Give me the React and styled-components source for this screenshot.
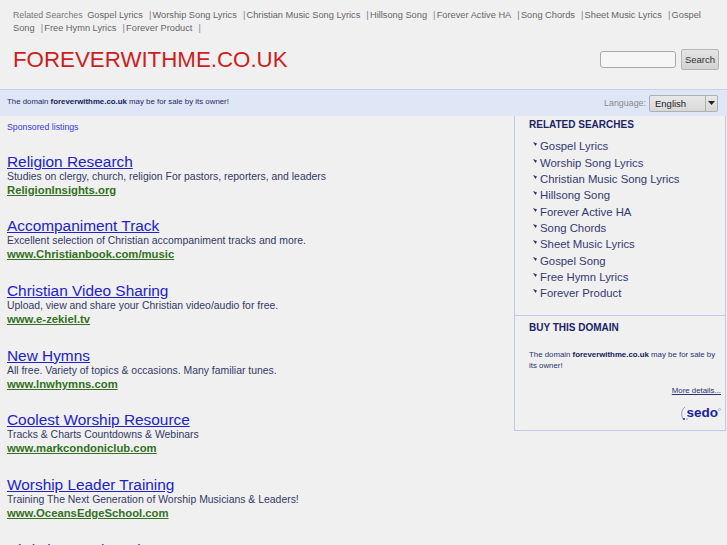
import React from "react";
import styled, { createGlobalStyle } from "styled-components";

const Global = createGlobalStyle`
  html, body { margin: 0; padding: 0; height: 545px; overflow: hidden; background: #f0f0f0; }
  body { font-family: "Liberation Sans", Arial, sans-serif; }
`;
const Page = styled.div`width: 727px; height: 545px; overflow: hidden; background: #f0f0f0;`;
const Header = styled.header`height: 89px; display: flex; flex-direction: column; padding: 0 0 0 13px; box-sizing: border-box;`;
const TopLinks = styled.div`padding-top: 9px; font-size: 9.25px; line-height: 13px; color: #6b6b6b; width: 700px;`;
const TopLabel = styled.span`color: #777; font-size: 8.75px; margin-right: 2px;`;
const TopLink = styled.a`color: #666; margin-right: 3.5px;`;
const Pipe = styled.span`color: #8a7a9a; margin-right: 1.2px;`;
const HeaderRow = styled.div`display: flex; justify-content: space-between; align-items: flex-start; padding-right: 8px;`;
const Logo = styled.h1`margin: 10px 0 0; font-size: 22.3px; line-height: 29px; font-weight: 400; color: #cc1e1e;`;
const SearchForm = styled.div`display: flex; align-items: center; gap: 5px; margin-top: 14px;`;
const SearchInput = styled.div`width: 74px; height: 15px; border: 1px solid #a9a9a9; border-radius: 3px; background: #f6f6f6;`;
const SearchButton = styled.div`width: 36px; height: 19px; border: 1px solid #b5b5b5; border-radius: 2px; background: linear-gradient(#e4e4e4,#d2d2d2); font-size: 9.5px; line-height: 19px; text-align: center; color: #333;`;
const Band = styled.div`height: 26px; background: #dfe6f5; border-top: 1px solid #c6d2ea; display: flex; align-items: center; justify-content: space-between; padding: 0 9px 0 7px;`;
const Notice = styled.div`font-size: 7.85px; line-height: 11px; margin-top: -3px; color: #1f2a66; b { color: #141c5a; }`;
const Lang = styled.div`display: flex; align-items: center; gap: 3px; font-size: 8.9px; color: #8a8a8a;`;
const Select = styled.div`width: 67px; height: 15px; border: 1px solid #b0b0b0; border-radius: 2px; background: linear-gradient(#e8e8e8,#d8d8d8); display: flex; font-size: 9.5px; color: #222; line-height: 15px;`;
const SelectText = styled.div`flex: 1; padding-left: 5px;`;
const SelectArrow = styled.div`width: 11px; border-left: 1px solid #b0b0b0; display: flex; align-items: center; justify-content: center;`;
const Main = styled.div`display: flex; align-items: flex-start;`;
const Left = styled.div`width: 514px; padding: 6px 0 0 7px; box-sizing: border-box;`;
const Sponsored = styled.div`font-size: 8.75px; line-height: 11px; color: #3a3ae0; margin-bottom: 20.5px;`;
const Ad = styled.div`margin-bottom: 21.7px; display: flex; flex-direction: column; align-items: flex-start;`;
const AdTitle = styled.a`font-size: 15.4px; line-height: 16px; color: #2222cc; text-decoration: underline;`;
const AdText = styled.div`font-size: 10.43px; line-height: 14px; color: #333a66;`;
const AdUrl = styled.a`font-size: 11.3px; line-height: 13px; font-weight: 700; color: #33701f; text-decoration: underline;`;
const Side = styled.aside`width: 212px; height: 315px; border: 1px solid #bccbea; border-top: 0; box-sizing: border-box; display: flex; flex-direction: column;`;
const SideTitle = styled.h2`margin: ${p => p.$top}px 0 0; padding: 0 0 0 14px; font-size: 10px; line-height: 14px; font-weight: 700; color: #1a2466;`;
const SearchList = styled.ul`list-style: none; margin: 6px 0 0; padding: 0 0 0 18px; height: 177px; border-bottom: 1px solid #bccbea;`;
const Item = styled.li`display: flex; align-items: center; gap: 3px; height: 16.35px; font-size: 11.35px; color: #333a70;`;
const Bullet = styled.svg`width: 4px; height: 4px; margin-top: -4px; flex: none;`;
const BuyBody = styled.p`margin: 14px 6px 0 14px; font-size: 7.85px; line-height: 11px; color: #2a3270; b { color: #141c5a; }`;
const More = styled.a`align-self: flex-end; margin: 14px 4px 0 0; font-size: 7.85px; line-height: 11px; color: #2a3270; text-decoration: underline;`;
const Sedo = styled.div`position: relative; align-self: flex-end; margin: 9px 7px 0 0; font-size: 13.5px; line-height: 15px; font-weight: 700; color: #1a2299;`;
const SedoSwoosh = styled.svg`position: absolute; left: -6px; top: 1px; width: 8px; height: 15px;`;
const SedoMark = styled.svg`position: absolute; right: -3px; top: 3px; width: 3px; height: 3px;`;

const topLinks = ["Gospel Lyrics","Worship Song Lyrics","Christian Music Song Lyrics","Hillsong Song","Forever Active HA","Song Chords","Sheet Music Lyrics","Gospel Song","Free Hymn Lyrics","Forever Product"];
const ads = [
 ["Religion Research","Studies on clergy, church, religion For pastors, reporters, and leaders","ReligionInsights.org"],
 ["Accompaniment Track","Excellent selection of Christian accompaniment tracks and more.","www.Christianbook.com/music"],
 ["Christian Video Sharing","Upload, view and share your Christian video/audio for free.","www.e-zekiel.tv"],
 ["New Hymns","All free. Variety of topics & occasions. Many familiar tunes.","www.lnwhymns.com"],
 ["Coolest Worship Resource","Tracks & Charts Countdowns & Webinars","www.markcondoniclub.com"],
 ["Worship Leader Training","Training The Next Generation of Worship Musicians & Leaders!","www.OceansEdgeSchool.com"],
 ["Christian Music Lyrics","",""],
];

export default function App() {
  return (
    <Page>
      <Global />
      <Header>
        <TopLinks>
          <TopLabel>Related Searches</TopLabel>{" "}
          {topLinks.map((t) => (
            <React.Fragment key={t}>
              <TopLink>{t}</TopLink>{" "}<Pipe>|</Pipe>
            </React.Fragment>
          ))}
        </TopLinks>
        <HeaderRow>
          <Logo>FOREVERWITHME.CO.UK</Logo>
          <SearchForm>
            <SearchInput />
            <SearchButton>Search</SearchButton>
          </SearchForm>
        </HeaderRow>
      </Header>
      <Band>
        <Notice>The domain <b>foreverwithme.co.uk</b> may be for sale by its owner!</Notice>
        <Lang>
          Language:
          <Select>
            <SelectText>English</SelectText>
            <SelectArrow><svg width="7" height="4" viewBox="0 0 7 4"><path d="M0 0h7L3.5 4z" fill="#222"/></svg></SelectArrow>
          </Select>
        </Lang>
      </Band>
      <Main>
        <Left>
          <Sponsored>Sponsored listings</Sponsored>
          {ads.map(([a,b,c]) => (
            <Ad key={a}>
              <AdTitle>{a}</AdTitle>
              <AdText>{b}</AdText>
              <AdUrl>{c}</AdUrl>
            </Ad>
          ))}
        </Left>
        <Side>
          <SideTitle $top={2}>RELATED SEARCHES</SideTitle>
          <SearchList>
            {topLinks.map(t => (
              <Item key={t}>
                <Bullet viewBox="0 0 4 4"><path d="M0 0l4 1.5L2.5 4z" fill="#2a3270"/></Bullet>
                {t}
              </Item>
            ))}
          </SearchList>
          <SideTitle $top={5}>BUY THIS DOMAIN</SideTitle>
          <BuyBody>The domain <b>foreverwithme.co.uk</b> may be for sale by its owner!</BuyBody>
          <More>More details...</More>
          <Sedo>
            <SedoSwoosh viewBox="0 0 8 15"><path d="M5 1C1 4 1 9 3 13" fill="none" stroke="#7f9ad8" strokeWidth="1"/><circle cx="4" cy="13" r="1" fill="#1a2299"/><circle cx="7" cy="13" r="0.8" fill="#7f9ad8"/></SedoSwoosh>
            sedo
            <SedoMark viewBox="0 0 3 3"><circle cx="1.5" cy="1.5" r="1" fill="none" stroke="#8a8fc0" strokeWidth="0.6"/></SedoMark>
          </Sedo>
        </Side>
      </Main>
    </Page>
  );
}
